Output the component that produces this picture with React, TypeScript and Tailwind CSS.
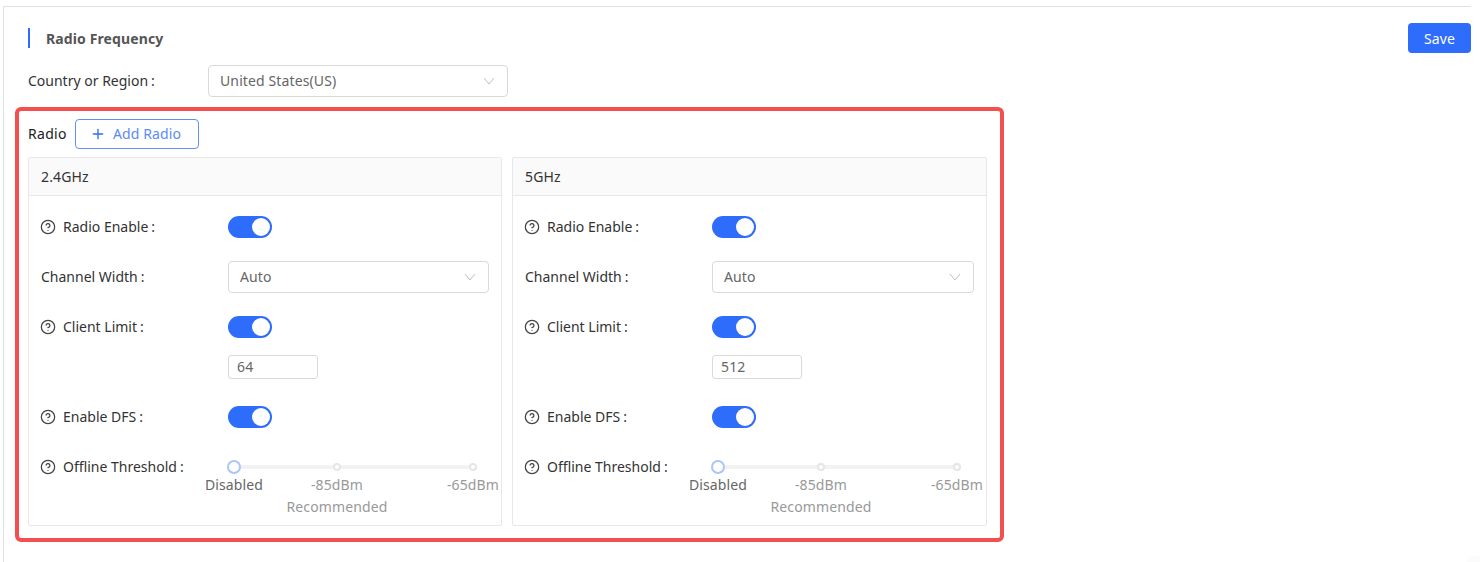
import { CircleHelp, Plus } from 'lucide-react';

// Thin arrow used by the select boxes
function Arrow() {
  return (
    <svg width="12" height="8" viewBox="0 0 12 8" fill="none" className="shrink-0">
      <path d="M1 1l5 6 5-6" stroke="#bfbfbf" strokeWidth="1" />
    </svg>
  );
}

function SelectBox({ value, className }: { value: string; className: string }) {
  return (
    <div className={`flex h-8 items-center justify-between rounded-[4px] border border-[#d9d9d9] bg-white pl-[11px] pr-3 text-[14px] text-[#666] ${className}`}>
      <span className="pb-[2px]">{value}</span>
      <Arrow />
    </div>
  );
}

function Toggle() {
  return (
    <div className="flex h-[22px] w-11 items-center justify-end rounded-full bg-[#2e6cfb] pr-[2px]">
      <div className="h-[18px] w-[18px] rounded-full bg-white" />
    </div>
  );
}

function Label({ text, help }: { text: string; help?: boolean }) {
  return (
    <div className="flex w-[187px] shrink-0 items-center text-[14px] tracking-normal text-[#333]">
      {help && <CircleHelp size={16} strokeWidth={1.9} className="-ml-px mr-[7px] shrink-0 text-[#444]" />}
      <span className="pb-[2px]">{text}</span>
      <span className="ml-[3px] pb-[2px]">:</span>
    </div>
  );
}

function Row({ label, help, children }: { label: string; help?: boolean; children: React.ReactNode }) {
  return (
    <div className="flex h-8 items-center">
      <Label text={label} help={help} />
      {children}
    </div>
  );
}

const marks = [
  { text: 'Disabled', left: 'left-[6px]', color: 'text-[#666]' },
  { text: '-85dBm', left: 'left-[109px]', color: 'text-[#999]' },
  { text: '-65dBm', left: 'left-[245px]', color: 'text-[#999]' },
];

function ThresholdSlider() {
  return (
    <div className="relative h-[60px] flex-1 self-start">
      <div className="absolute left-0 top-[14px] h-1 w-[249px] rounded-full bg-[#f2f2f2]" />
      <div className="absolute left-[-1px] top-[9px] h-[14px] w-[14px] rounded-full border-2 border-[#a9c5fb] bg-white" />
      <div className="absolute left-[105px] top-[12px] h-2 w-2 rounded-full border-2 border-[#e6e6e6] bg-white" />
      <div className="absolute left-[241px] top-[12px] h-2 w-2 rounded-full border-2 border-[#e6e6e6] bg-white" />
      {marks.map((m) => (
        <span key={m.text} className={`absolute top-[24px] -translate-x-1/2 whitespace-nowrap text-[14px] leading-5 ${m.left} ${m.color}`}>
          {m.text}
        </span>
      ))}
      <span className="absolute left-[109px] top-[46px] -translate-x-1/2 whitespace-nowrap text-[14px] leading-5 text-[#999]">
        Recommended
      </span>
    </div>
  );
}

function RadioCard({ title, limit, className }: { title: string; limit: string; className: string }) {
  return (
    <div className={`h-[369px] rounded-[2px] border border-[#e8e8e8] ${className}`}>
      <div className="flex h-[38px] items-center border-b border-[#e8e8e8] bg-[#fafafa] px-3 text-[14px] text-[#333]">{title}</div>
      <div className="flex flex-col px-3 pt-[15px]">
        <Row label="Radio Enable" help>
          <Toggle />
        </Row>
        <div className="mt-[18px]">
          <Row label="Channel Width">
            <SelectBox value="Auto" className="flex-1" />
          </Row>
        </div>
        <div className="mt-[18px]">
          <Row label="Client Limit" help>
            <Toggle />
          </Row>
        </div>
        <div className="ml-[187px] mt-3 flex h-6 w-[90px] items-center rounded-[3px] border border-[#d9d9d9] px-2 pb-[2px] text-[14px] text-[#666]">{limit}</div>
        <div className="mt-[22px]">
          <Row label="Enable DFS" help>
            <Toggle />
          </Row>
        </div>
        <div className="mt-[18px] flex items-start">
          <div className="flex h-8 items-center">
            <Label text="Offline Threshold" help />
          </div>
          <ThresholdSlider />
        </div>
      </div>
    </div>
  );
}

export default function App() {
  return (
    <div className="relative h-[562px] w-[1480px] overflow-hidden bg-white pl-[3px] pt-[6px] font-['Noto_Sans',sans-serif] tracking-[0.12px]">
      <div className="h-[556px] w-[1468px] border-l border-t border-[#e0e0e0] pl-[11px]">
        <div className="ml-[13px] flex items-start justify-between pt-4">
          <div className="mt-[5px] flex h-5 items-center border-l-2 border-[#2e6cfb] pl-4 text-[14px] font-bold text-[#555]">Radio Frequency</div>
          <button className="h-[30px] w-[63px] rounded-[4px] bg-[#2e6cfb] text-[14px] text-white">Save</button>
        </div>
        <div className="ml-[13px] mt-3 flex items-center">
          <div className="w-[180px] pb-[2px] text-[14px] tracking-normal text-[#333]">
            Country or Region<span className="ml-[3px]">:</span>
          </div>
          <SelectBox value="United States(US)" className="w-[300px]" />
        </div>
        <div className="mt-[10px] h-[435px] w-[989px] rounded-[6px] border-4 border-[#f44f4f] pl-[9px] pr-[13px] pt-2">
          <div className="flex items-center">
            <span className="w-[47px] pb-px text-[14px] tracking-[0.3px] text-[#222]">Radio</span>
            <button className="flex h-[30px] w-[124px] items-center gap-[7px] rounded-[4px] border border-[#5f8ff8] pb-[2px] pl-[14px] text-[14px] text-[#5b8bf7]">
              <Plus size={16} strokeWidth={2} className="mt-[2px] text-[#2e6cfb]" />
              Add Radio
            </button>
          </div>
          <div className="mt-2 flex gap-[10px]">
            <RadioCard title="2.4GHz" limit="64" className="w-[474px]" />
            <RadioCard title="5GHz" limit="512" className="w-[475px]" />
          </div>
        </div>
      </div>
      {/* faint floating widget peeking in at the corner */}
      <div className="absolute bottom-0 right-0 h-[6px] w-[13px] rounded-tl-md bg-[#fbfbfb]" />
    </div>
  );
}
